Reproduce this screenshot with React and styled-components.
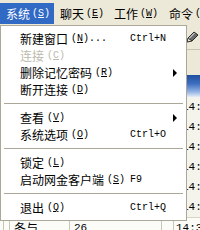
import React from "react";
import styled, { createGlobalStyle } from "styled-components";

const GlobalStyle = createGlobalStyle`
  html, body {
    margin: 0;
    padding: 0;
    width: 200px;
    height: 230px;
    overflow: hidden;
    background: #ece9d8;
  }
  * { box-sizing: border-box; }
`;

const cjk = `"Noto Sans CJK SC", "Noto Sans", sans-serif`;
const mono = `"Liberation Mono", "DejaVu Sans Mono", monospace`;

const Screen = styled.div`
  position: relative;
  width: 200px;
  height: 230px;
  overflow: hidden;
  font-family: ${cjk};
  font-size: 12px;
  color: #000;
`;

// top menu bar
const MenuBar = styled.div`
  display: flex;
  height: 24px;
  padding-top: 3px;
  background: #ece9d8;
  white-space: nowrap;
`;

const BarItem = styled.div`
  display: flex;
  align-items: center;
  gap: 2px;
  height: 21px;
  padding: 0 6px;
  flex-shrink: 0;
  width: ${(p) => p.w || 54}px;
  background: ${(p) => (p.active ? "#316ac5" : "transparent")};
  color: ${(p) => (p.active ? "#fff" : "#000")};
`;

const Key = styled.span`
  font-family: ${mono};
  font-size: 10px;
  u { text-decoration: underline; text-underline-offset: 1px; }
`;

// window content behind the menu
const Content = styled.div`
  display: flex;
  flex-direction: column;
`;

const Toolbar = styled.div`
  height: 26px;
  display: flex;
  justify-content: flex-end;
  align-items: center;
  padding-right: 1px;
  border-bottom: 1px solid #c7c4b3;
`;

const Gap = styled.div`
  height: 25px;
`;

const BlueBand = styled.div`
  height: 22px;
  background: linear-gradient(#1f4f9e 0%, #3d6fc0 40%, #8fb0e2 75%, #e4ecf8 100%);
`;

const List = styled.div`
  display: flex;
  flex-direction: column;
  background: #f4f3ec;
`;

const Row = styled.div`
  height: 20px;
  display: flex;
  align-items: center;
  font-family: ${mono};
  font-size: 11px;
`;

const Time = styled.span`
  margin-left: ${(p) => p.offset}px;
`;

const GridRow = styled.div`
  height: 20px;
  display: flex;
  align-items: center;
  background: #fbfbf8;
  border-top: 1px solid #d8d5c6;
`;

const Cell = styled.div`
  height: 100%;
  width: ${(p) => p.w}px;
  flex-shrink: 0;
  display: flex;
  align-items: center;
  padding-left: ${(p) => p.pad || 0}px;
  border-right: ${(p) => (p.line ? "1px solid #c9c6b6" : "none")};
  font-family: ${(p) => (p.num ? mono : cjk)};
  font-size: ${(p) => (p.num ? 11 : 12)}px;
`;

// dropdown menu over the content
const Dropdown = styled.div`
  position: absolute;
  left: 0;
  top: 25px;
  width: 187px;
  height: 196px;
  background: #fff;
  border: 1px solid #aca899;
  padding: 4px 1px 3px 1px;
  display: flex;
  flex-direction: column;
`;

const Item = styled.div`
  height: 17px;
  display: grid;
  grid-template-columns: 110px 1fr 14px;
  align-items: center;
  padding-left: 18px;
  white-space: nowrap;
  color: ${(p) => (p.disabled ? "#bdbaad" : "#000")};
`;

const Label = styled.span`
  display: flex;
  align-items: center;
  gap: 3px;
`;

const Shortcut = styled.span`
  font-family: ${mono};
  font-size: 10px;
`;

const Arrow = styled.span`
  width: 0;
  height: 0;
  border-top: 4px solid transparent;
  border-bottom: 4px solid transparent;
  border-left: 4px solid #000;
  justify-self: start;
  margin-left: 2px;
`;

const Separator = styled.div`
  height: 11px;
  display: flex;
  align-items: center;
  padding: 0 2px;
  &::after {
    content: "";
    flex: 1;
    height: 1px;
    background: #aca899;
  }
`;

const Mn = ({ k, after = "" }) => (
  <Key>
    (<u>{k}</u>){after}
  </Key>
);

const items = [
  { label: "新建窗口", k: "N", after: "...", sc: "Ctrl+N" },
  { label: "连接", k: "C", disabled: true },
  { label: "删除记忆密码", k: "R", sub: true },
  { label: "断开连接", k: "D" },
  "sep",
  { label: "查看", k: "V", sub: true },
  { label: "系统选项", k: "O", sc: "Ctrl+O" },
  "sep",
  { label: "锁定", k: "L" },
  { label: "启动网金客户端", k: "S", sc: "F9" },
  "sep",
  { label: "退出", k: "Q", sc: "Ctrl+Q" },
];

const NoteIcon = () => (
  <svg width="13" height="13" viewBox="0 0 13 13">
    <path d="M2 8 L8 2 L12 5 L6 11 Z" fill="#6b6b6b" stroke="#2b2b2b" strokeWidth="1" />
    <path d="M3 8.5 L8.5 3" stroke="#fff" strokeWidth="1" />
    <path d="M2 8 L1 12 L6 11" fill="none" stroke="#2b2b2b" strokeWidth="1" />
  </svg>
);

const App = () => {
  return (
    <Screen>
      <GlobalStyle />
      <MenuBar>
        <BarItem active>
          系统<Mn k="S" />
        </BarItem>
        <BarItem>
          聊天<Mn k="E" />
        </BarItem>
        <BarItem w={55}>
          工作<Mn k="W" />
        </BarItem>
        <BarItem>
          命令<Mn k="C" />
        </BarItem>
      </MenuBar>

      <Content>
        <Toolbar>
          <NoteIcon />
        </Toolbar>
        <Gap />
        <BlueBand />
        <List>
          {[0, 1, 2, 3, 4, 5].map((i) => (
            <Row key={i}>
              <Time offset={182}>14:3{i}</Time>
            </Row>
          ))}
        </List>
        <GridRow>
          <Cell w={4} line />
          <Cell w={6} line />
          <Cell w={60} pad={4} line>
            冬与
          </Cell>
          <Cell w={92} pad={4} num line>
            26
          </Cell>
          <Cell w={12} line />
          <Cell w={20} num pad={2}>
            14:36
          </Cell>
        </GridRow>
      </Content>

      <Dropdown>
        {items.map((it, i) =>
          it === "sep" ? (
            <Separator key={i} />
          ) : (
            <Item key={i} disabled={it.disabled}>
              <Label>
                {it.label}
                <Mn k={it.k} after={it.after} />
              </Label>
              <Shortcut>{it.sc || ""}</Shortcut>
              {it.sub ? <Arrow /> : <span />}
            </Item>
          )
        )}
      </Dropdown>
    </Screen>
  );
};

export default App;
